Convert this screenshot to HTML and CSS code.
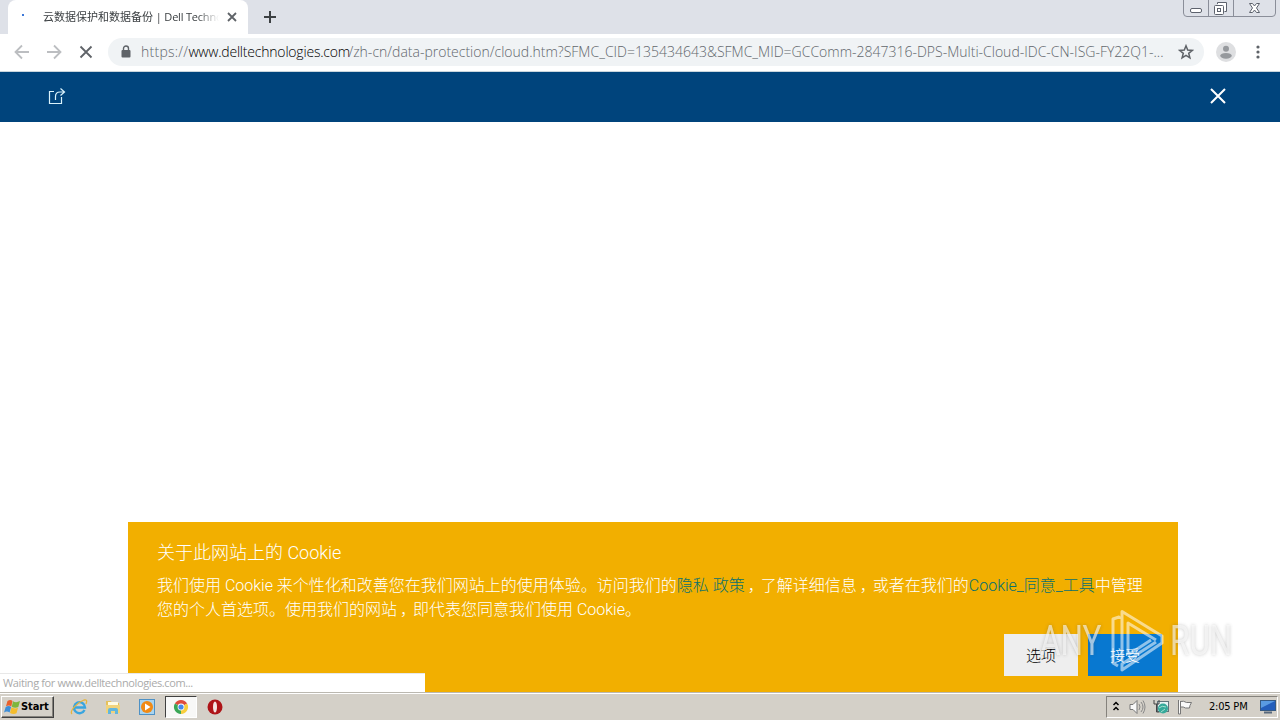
FILE: index.html
```html
<!DOCTYPE html>
<html lang="zh-CN">
<head>
  <meta charset="utf-8">
  <title>云数据保护和数据备份 | Dell Technologies</title>
  <link rel="stylesheet" href="styles.css">
</head>
<body>
  <div class="tab-strip">
    <div class="tab">
      <span class="loading-dot"></span>
      <span class="tab-title">云数据保护和数据备份 <span class="tab-latin">| Dell Techno</span></span>
      <svg class="tab-close" width="10" height="10" viewBox="0 0 10 10"><path d="M1 1l8 8M9 1l-8 8"/></svg>
    </div>
    <svg class="new-tab" width="14" height="14" viewBox="0 0 14 14"><path d="M7 1v12M1 7h12"/></svg>
    <svg class="window-buttons" width="94" height="18" viewBox="0 0 94 18">
      <path class="frame" d="M.5 0v13q0 3.500 3.500 3.500h85q3.500 0 3.500-3.500V0M25.500 0v16M50.500 0v16"/>
      <rect x="7.500" y="8.500" width="11" height="4" rx="1.500"/>
      <path d="M34.500 4V2.500h9v9H41.500"/>
      <rect x="31.500" y="5.500" width="9" height="9" rx="1"/>
      <rect x="34.500" y="8.500" width="3" height="3"/>
      <path d="M66.500 3.500h3l2 2.500 2-2.500h3l-3 4.500 3 4.500h-3l-2-2.500-2 2.500h-3l3-4.500z"/>
    </svg>
  </div>

  <div class="toolbar">
    <svg class="nav off" width="16" height="16" viewBox="0 0 16 16"><path d="M15 8H2M8 1.500L1.500 8 8 14.500"/></svg>
    <svg class="nav off" width="16" height="16" viewBox="0 0 16 16"><path d="M1 8h13M8 1.500L14.500 8 8 14.500"/></svg>
    <svg class="nav" width="16" height="16" viewBox="0 0 16 16"><path d="M2.500 2.500l11 11M13.500 2.500l-11 11"/></svg>
    <div class="address">
      <svg class="lock" width="10" height="13" viewBox="0 0 10 13"><path d="M2.500 6V3.500a2.500 2.500 0 0 1 5 0V6" fill="none" stroke="#5f6368" stroke-width="1.400"/><rect x=".5" y="5" width="9" height="7.500" rx="1" fill="#5f6368"/></svg>
      <div class="url"><span class="scheme">https://</span><span class="host">www.delltechnologies.com</span><span class="path">/zh-cn/data-protection/cloud.htm?SFMC_CID=135434643&amp;</span><span class="query">SFMC_MID=GCComm-2847316-DPS-Multi-Cloud-IDC-CN-ISG-FY22Q1-...</span></div>
      <svg class="star" width="16" height="16" viewBox="0 0 16 16"><path d="M8 1.800l1.700 4.300 4.600.3-3.600 2.900 1.200 4.500L8 11.300l-3.900 2.500 1.200-4.500-3.600-2.900 4.600-.3z"/></svg>
    </div>
    <svg class="avatar" width="20" height="20" viewBox="0 0 20 20"><circle cx="10" cy="10" r="10" fill="#dedfe1"/><circle cx="10" cy="6.800" r="3" fill="#96999d"/><ellipse cx="10" cy="13.800" rx="5.800" ry="2.900" fill="#96999d"/></svg>
    <svg class="kebab" width="4" height="14" viewBox="0 0 4 14"><circle cx="2" cy="2" r="1.600"/><circle cx="2" cy="7" r="1.600"/><circle cx="2" cy="12" r="1.600"/></svg>
  </div>

  <div class="site-bar">
    <svg width="18" height="18" viewBox="0 0 18 18"><path d="M6 4.500H1.500v12h12V10M7.500 13V9.500q0-4.500 4.500-4.500H16M12.500 1.500L16.500 5l-4 3.500"/></svg>
    <svg class="close" width="16" height="16" viewBox="0 0 16 16"><path d="M1 1l14 14M15 1L1 15"/></svg>
  </div>

  <div class="page">
    <div class="cookie">
      <h2>关于此网站上的 Cookie</h2>
      <p>我们使用 Cookie 来个性化和改善您在我们网站上的使用体验。访问我们的<a>隐私 政策</a><span class="comma">，</span>了解详细信息<span class="comma">，</span>或者在我们的<a>Cookie_同意_工具</a>中管理<br>您的个人首选项。使用我们的网站<span class="comma">，</span>即代表您同意我们使用 Cookie。</p>
      <div class="buttons">
        <button class="options">选项</button>
        <button class="accept">接受</button>
      </div>
    </div>
    <div class="status">Waiting for www.delltechnologies.com...</div>
    <div class="watermark">
      <span class="any">ANY</span>
      <svg width="56" height="66" viewBox="0 0 56 66"><path d="M9 11V9L3 11v44l5 3M12 53V3.500L52 28v7L12 62v-6l34-22M18 47V15l28 17M18 47l23-15"/></svg>
      <span class="run">RUN</span>
    </div>
  </div>

  <div class="taskbar">
    <div class="start">
      <svg width="17" height="16" viewBox="0 0 17 16"><path d="M3.500 2q3-2 5 0L7.300 7.500Q5 5.500 2 7.300z" fill="#e8602c"/><path d="M9 2.200q3 2 7-.2L14.300 8Q11 9.500 7.800 7.700z" fill="#7eb63c"/><path d="M1.700 8q3-2 5.400 0l-1.500 5.500Q3 11.500 0 13.500z" fill="#3d8ed8"/><path d="M7.500 8.300q3 2 6.500.5l-1.500 5.500q-3 1.500-6.500-.3z" fill="#f5bd2d"/></svg>
      <span>Start</span>
    </div>
    <div class="quick">
      <svg width="18" height="18" viewBox="0 0 18 18"><path d="M14.500 12A5.500 5.500 0 1 1 15 9.500H5" fill="none" stroke="#39a5df" stroke-width="2.400"/><path d="M2 16C-1 13 8 4 14 2q4-1 2 4" fill="none" stroke="#e6b43c" stroke-width="1.300"/></svg>
    </div>
    <div class="quick">
      <svg width="18" height="18" viewBox="0 0 18 18"><path d="M2 3h5l1 2h7v10H2z" fill="#e5c15c"/><path d="M4 4h10v5H4z" fill="#fffbe2"/><path d="M2 7h14v8H2z" fill="#f1d37b"/><path d="M4 16v-4q0-2 2-2h6q2 0 2 2v4h-3v-3H7v3z" fill="#62b6dd"/></svg>
    </div>
    <div class="quick">
      <svg width="18" height="18" viewBox="0 0 18 18"><rect x="1.500" y="1.500" width="15" height="15" fill="#a9d4ef" stroke="#4e91c5"/><circle cx="9" cy="9" r="6" fill="#f18a14"/><path d="M7 5.500v7l5.500-3.500z" fill="#fff"/></svg>
    </div>
    <div class="quick active">
      <svg width="16" height="16" viewBox="0 0 16 16"><path d="M8 8L1.900 4.500A7 7 0 0 1 14.100 4.500z" fill="#df4c3c"/><path d="M8 8l6.100-3.500A7 7 0 0 1 8 15z" fill="#f8ce3d"/><path d="M8 8v7A7 7 0 0 1 1.900 4.500z" fill="#3ba757"/><circle cx="8" cy="8" r="3.400" fill="#fff"/><circle cx="8" cy="8" r="2.600" fill="#4688ec"/></svg>
    </div>
    <div class="quick">
      <svg width="16" height="16" viewBox="0 0 16 16"><circle cx="8" cy="8" r="7.500" fill="#ae1418"/><ellipse cx="8" cy="8" rx="2" ry="5.500" fill="#f4e5e2"/></svg>
    </div>
    <div class="tray">
      <svg width="8" height="14" viewBox="0 0 8 14"><path d="M1.500 5L4 2.500 6.500 5M1.500 10L4 7.500 6.500 10" fill="none" stroke="#000" stroke-width="1.500"/></svg>
      <svg class="speaker" width="17" height="16" viewBox="0 0 17 16"><path d="M1 5.500h3l4-4v13l-4-4H1z" fill="#f8f8f8" stroke="#777"/><path d="M10 5q2 3 0 6M12 3q4 5 0 10M14 1.500q4 6.500 0 13" fill="none" stroke="#888"/></svg>
      <svg class="network" width="17" height="16" viewBox="0 0 17 16"><rect x="4.500" y="2.500" width="11" height="10" fill="#e8f3f3" stroke="#62747b"/><path d="M1 1v4h5V1M3.500 5v8h3" fill="none" stroke="#444"/><circle cx="10" cy="9.500" r="5" fill="#35a99a"/><path d="M6 9q3-3 7-1M8 13l4-3" fill="none" stroke="#a6e0cf"/></svg>
      <svg class="flag" width="16" height="16" viewBox="0 0 16 16"><path d="M1.500 1v14h2V2M3.500 2.500q3-1 6 1h5q-2 3-2 5.500H8.500q-2-1.500-5-1z" fill="#fafafa" stroke="#777"/></svg>
      <span class="clock">2:05 PM</span>
      <svg class="desktop" width="16" height="14" viewBox="0 0 16 14"><rect x=".5" y=".5" width="15" height="10" fill="#245ebb" stroke="#365a83"/><path d="M1 1h14L1 8z" fill="#5a9be2"/><path d="M4 12.500h8" stroke="#58697c" stroke-width="2"/></svg>
    </div>
  </div>
</body>
</html>
```
FILE: styles.css
```css
* {
  box-sizing: border-box;
}

body {
  margin: 0;
  width: 1280px;
  height: 720px;
  overflow: hidden;
  display: flex;
  flex-direction: column;
  background: #fff;
  font-family: "Open Sans", "Noto Sans CJK SC", sans-serif;
}

svg {
  display: block;
  flex: none;
}

/* browser tabs */
.tab-strip {
  display: flex;
  height: 34px;
  padding-left: 8px;
  background: #dee1e8;
}

.tab {
  display: flex;
  align-items: center;
  width: 240px;
  height: 34px;
  padding: 0 11px 0 14px;
  background: #fff;
  border-radius: 8px 8px 0 0;
}

.loading-dot {
  width: 2px;
  height: 2px;
  margin: -5px 19px 0 0;
  background: #3c78d8;
}

.tab-title {
  width: 176px;
  margin-right: 8px;
  white-space: nowrap;
  font: 11px/16px "Open Sans", "Noto Sans CJK SC", sans-serif;
  color: #3c4043;
  -webkit-mask-image: linear-gradient(to right, #000 88%, transparent);
}

.tab-latin {
  letter-spacing: -.2px;
}

.tab-close {
  fill: none;
  stroke: #5f6368;
  stroke-width: 1.8;
}

.new-tab {
  margin: 10px 0 0 15px;
  fill: none;
  stroke: #3c4043;
  stroke-width: 2;
}

.window-buttons {
  margin-left: auto;
  margin-right: 3px;
  fill: #fff;
  stroke: #5d626d;
}

.window-buttons .frame {
  fill: none;
  stroke: #8a8e99;
}

/* address row */
.toolbar {
  display: flex;
  align-items: center;
  height: 38px;
  padding: 0 0 2px 14px;
  border-bottom: 1px solid #c9d5dc;
}

.nav {
  margin-right: 16px;
  fill: none;
  stroke: #5f6368;
  stroke-width: 1.8;
}

.nav.off {
  stroke: #bcbec1;
}

.address {
  display: flex;
  align-items: center;
  width: 1096px;
  height: 28px;
  margin-left: -2px;
  padding: 0 10px 0 13px;
  border-radius: 14px;
  background: #f0f3f5;
}

.url {
  width: 1024px;
  margin: 0 13px 0 10px;
  white-space: nowrap;
  font-size: 14px;
  font-weight: 300;
  line-height: 20px;
  color: #62676c;
}

.scheme {
  letter-spacing: .25px;
}

.host {
  display: inline-block;
  width: 160px;
  color: #000;
  letter-spacing: -.2px;
}

.star {
  fill: none;
  stroke: #5f6368;
  stroke-width: 1.5;
}

.avatar {
  margin-left: 12px;
}

.kebab {
  margin-left: 20px;
  fill: #5f6368;
}

/* site header */
.site-bar {
  display: flex;
  align-items: center;
  justify-content: space-between;
  height: 50px;
  padding: 0 54px 2px 48px;
  background: #00447c;
}

.site-bar svg {
  fill: none;
  stroke: #d9f2fb;
  stroke-width: 1.2;
}

.site-bar .close {
  stroke: #fff;
  stroke-width: 2;
}

.page {
  position: relative;
  display: flex;
  flex: 1;
  align-items: flex-end;
}

/* cookie banner */
.cookie {
  width: 1050px;
  height: 170px;
  margin-left: 128px;
  padding: 18px 16px 0 29px;
  background: #f2af00;
  color: #fff;
  font-family: Roboto, "Noto Sans CJK SC", sans-serif;
  font-weight: 300;
}

.cookie h2 {
  margin: 0;
  font-size: 18px;
  font-weight: 300;
  line-height: 26px;
}

.cookie p {
  margin: 8px 0 0;
  white-space: nowrap;
  font-size: 16px;
  line-height: 24px;
}

.cookie a {
  color: #08706f;
}

.comma {
  display: inline-block;
  transform: translateX(3px);
}

.buttons {
  display: flex;
  justify-content: flex-end;
  gap: 10px;
  margin-top: 12px;
}

.buttons button {
  width: 74px;
  height: 42px;
  padding: 0;
  border: 0;
  font: 300 15px/20px "Noto Sans CJK SC", sans-serif;
}

.options {
  background: #eee;
  color: #000;
}

.accept {
  background: #0878d0;
  color: #fff;
}

.status {
  position: absolute;
  left: 0;
  bottom: 0;
  width: 425px;
  height: 19px;
  padding-left: 3px;
  background: #fff;
  border-top: 1px solid #e8e8e8;
  font-size: 11px;
  line-height: 18px;
  letter-spacing: -.38px;
  color: #aaa;
}

.watermark {
  position: absolute;
  left: 1040px;
  top: 486px;
  display: flex;
  align-items: center;
  width: 200px;
  height: 66px;
  font: 42px/50px Roboto, sans-serif;
  color: rgba(255, 255, 255, .6);
}

.watermark span {
  flex: none;
  width: 62px;
  transform: scaleX(.75);
  transform-origin: left;
  text-shadow: 0 0 4px rgba(80, 80, 80, .3);
}

.watermark svg {
  margin: 0 4px 0 8px;
  fill: none;
  stroke: rgba(255, 255, 255, .55);
  stroke-width: 3;
  stroke-linejoin: round;
}

/* taskbar */
.taskbar {
  display: flex;
  align-items: center;
  height: 28px;
  padding: 0 2px 0 1px;
  border-top: 1px solid #bbb8b0;
  background: #d4d0c8;
  box-shadow: inset 0 1px #fff;
}

.start {
  display: flex;
  align-items: center;
  width: 53px;
  height: 22px;
  padding-left: 2px;
  border: 1px solid;
  border-color: #fff #404040 #404040 #fff;
  box-shadow: inset -1px -1px #85827c;
  font: bold 11px "DejaVu Sans Condensed", "DejaVu Sans", sans-serif;
  letter-spacing: -.1px;
}

.quick {
  display: flex;
  align-items: center;
  justify-content: center;
  width: 32px;
  height: 22px;
  margin-right: 2px;
}

.start + .quick {
  margin-left: 9px;
}

.quick.active {
  border: 1px solid;
  border-color: #404040 #fff #fff #404040;
  background: #f8f8f7;
}

.tray {
  display: flex;
  align-items: center;
  width: 172px;
  height: 22px;
  margin-left: auto;
  padding-left: 5px;
  border: 1px solid;
  border-color: #85827c #fff #fff #85827c;
}

.speaker {
  margin-left: 9px;
}

.network {
  margin-left: 7px;
}

.flag {
  margin-left: 7px;
}

.clock {
  width: 41px;
  margin-left: 16px;
  white-space: nowrap;
  font: 11px/18px "DejaVu Sans Condensed", "DejaVu Sans", sans-serif;
  letter-spacing: -.2px;
}

.desktop {
  margin-left: 10px;
}
```
